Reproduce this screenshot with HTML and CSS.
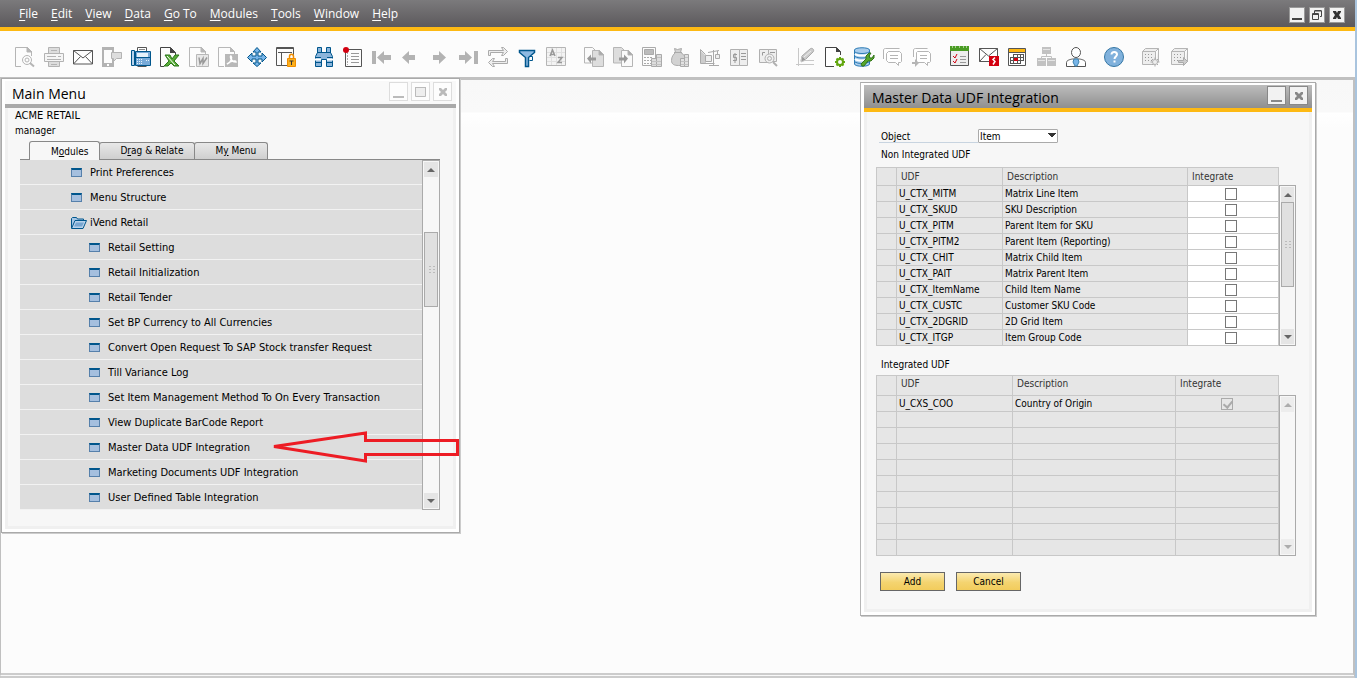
FILE: index.html
```
<!DOCTYPE html>
<html lang="en">
<head>
<meta charset="utf-8">
<title>Master Data UDF Integration</title>
<link rel="stylesheet" href="styles.css">
</head>
<body>
<div class="app">
<header class="menubar">
  <nav class="menus">
    <button><u>F</u>ile</button><button><u>E</u>dit</button><button><u>V</u>iew</button><button><u>D</u>ata</button><button><u>G</u>o To</button><button><u>M</u>odules</button><button><u>T</u>ools</button><button><u>W</u>indow</button><button><u>H</u>elp</button>
  </nav>
  <div class="appctl">
    <button aria-label="Minimize"><svg width="12" height="12"><path d="M1 9h10v2H1z" fill="#444"/></svg></button>
    <button aria-label="Restore"><svg width="12" height="12" fill="none" stroke="#444"><path d="M3.500 4V2h7v5.500H9M3.500 1.500h7M1.500 4.500h6v6h-6zM1.500 5.500h6"/></svg></button>
    <button aria-label="Close"><svg width="12" height="12"><path d="M2 2h3l1 2 1-2h3v1L8 6l2 3v1H7L6 8l-1 2H2V9l2-3-2-3z" fill="#333"/></svg></button>
  </div>
</header>

<div class="toolbar">
  <div class="tools">
    <button aria-label="Preview"><svg viewBox="0 0 20 20" fill="none" stroke="#b5b5b5"><path d="M6 19.500H.5v-19h12l4 4V9"/><path d="M12 0v5h5z" fill="#b5b5b5"/><circle cx="12" cy="13" r="4.500"/><circle cx="12" cy="13" r="2"/><path d="M15 16l4 3.500" stroke-width="2"/></svg></button>
    <button aria-label="Print"><svg viewBox="0 0 20 20" fill="#ddd" stroke="#b3b3b3"><path d="M4.500 7V.5h11V7"/><path d="M7 3.500h6"/><path d="M.5 6.500h19v8H.5z" fill="#f5f5f5"/><path d="M3 9.500h9M14 9.500h3M3 12.500h14"/><path d="M4.500 14.500h11v5h-11z"/><path d="M7 17.500h6"/></svg></button>
    <button aria-label="E-mail"><svg viewBox="0 0 20 20" fill="#fff" stroke="#555"><path d="M.5 3.500h19v13.500H.5zM.5 3.500l9.500 7.500 9.500-7.500M.5 17l7-7.500M19.500 17l-7-7.500"/></svg></button>
    <button aria-label="SMS"><svg viewBox="0 0 20 20"><path d="M0 0h12v5h-2V3H2v13h8v-4h2v8H0z" fill="#b3b3b3"/><path d="M5 17h2v2H5z" fill="#fff"/><path d="M9.500 5.500h10v6h-5l-3 3v-3h-2z" fill="#ddd" stroke="#b3b3b3"/></svg></button>
    <button aria-label="Fax"><svg viewBox="0 0 20 20"><path d="M6.500 5V.5h9V5M6.500 19.500h9" fill="#fff" stroke="#555"/><path d="M8 2.500h6" stroke="#888"/><path d="M.5 3.500h3v15h-3z" fill="#b8d3ec" stroke="#00568c"/><path d="M4.500 4.500h15v14h-15z" fill="#78aad8" stroke="#00568c"/><path d="M6 6h11v4H6z" fill="#e5f2fb"/><path d="M5 10.500h14" stroke="#00568c"/><path d="M6 12.500h6M6 14.500h6M6 16.500h6M15 13.500h3" stroke="#e5f2fb" stroke-dasharray="1 1"/></svg></button>
    <button aria-label="Export to Excel"><svg viewBox="0 0 20 20"><path d="M4 19.500H.5v-19h10l5 5V8" fill="none" stroke="#444"/><path d="M10 0v6h6z" fill="#444"/><path d="M5 8h5l2 4 3-4h4l-5 6 5 5h-5l-3-3-3 3H4l5-5z" fill="#59ad38" stroke="#2a761a"/><path d="M7 9l8 9" stroke="#fff"/></svg></button>
    <button aria-label="Export to Word"><svg viewBox="0 0 20 20" fill="none" stroke="#b8b8b8"><path d="M6 19.500H.5v-19h12l4 4V7"/><path d="M12 0v5h5z" fill="#b8b8b8"/><path d="M7.500 7.500h12v12h-12z" fill="#e8e8e8"/><path d="M10 10.500l1 6 3-5 0 5 4-6" stroke="#999" stroke-width="1.500"/></svg></button>
    <button aria-label="Export to PDF"><svg viewBox="0 0 20 20"><path d="M6 19.500H.5v-19h12l4 4V7" fill="none" stroke="#b8b8b8"/><path d="M12 0v5h5zM7 7h13v13H7z" fill="#b8b8b8"/><path d="M9 17c5-2 5-7 4-8s-1 6 5 6c0-2-6-1-9 2z" fill="none" stroke="#fff" stroke-width="1.500"/></svg></button>
    <button aria-label="Launch application"><svg viewBox="0 0 20 20"><path d="M10 .5l4 4.500h-3v4h4V6l4.500 4.500L15 15v-3h-4v4h3l-4 3.500L6 16h3v-4H5v3L.5 10.500 5 6v3h4V5H6z" fill="#78b5e8" stroke="#00568c"/></svg></button>
    <button aria-label="Lock screen"><svg viewBox="0 0 20 20"><path d="M11 18.500H.5V.5h17V9M0 1.500h18M2 5.500h14M5.500 5v13" fill="none" stroke="#555"/><path d="M13.500 12V9.500c0-3 4-3 4 0V12" fill="none" stroke="#ef8d00" stroke-width="1.500"/><path d="M11.500 11.500h8v8h-8z" fill="#fbaf1c" stroke="#ef8d00"/><path d="M13.500 14h4M15.500 14v4" stroke="#333"/></svg></button>
  </div>
  <div class="tools">
    <button aria-label="Find"><svg viewBox="0 0 20 20"><path d="M3.500.5h4v5h5v-5h4v5l2 4v10h-6v-7h-5v7h-6v-10l2-4z" fill="#8bb5db" stroke="#00568c"/><path d="M1 12.500h6M13 12.500h6" stroke="#fff" stroke-width="2"/><path d="M3 5.500h5M12 5.500h5M1 10.500h6M13 10.500h6M1 15.500h6M13 15.500h6" stroke="#00568c"/></svg></button>
    <button aria-label="Add"><svg viewBox="0 0 20 20"><path d="M2.500 5v14.500h16V2.500H5" fill="none" stroke="#555"/><path d="M8 6.500h8M8 9.500h8M8 12.500h8M8 15.500h8" stroke="#999"/><path d="M4.500 5v13" stroke="#aaa" stroke-dasharray="2 1"/><circle cx="3" cy="3" r="3" fill="#d30010"/></svg></button>
    <button aria-label="First record"><svg viewBox="0 0 20 20" fill="#b3b3b3"><path d="M0 4h4v13H0zM5 10.500L12 4v4h7v5h-7v4z"/></svg></button>
    <button aria-label="Previous record"><svg viewBox="0 0 20 20" fill="#b3b3b3"><path d="M1 10.500L8 4v4h6v5H8v4z"/></svg></button>
    <button aria-label="Next record"><svg viewBox="0 0 20 20" fill="#b3b3b3"><path d="M16 10.500L9 4v4H3v5h6v4z"/></svg></button>
    <button aria-label="Last record"><svg viewBox="0 0 20 20" fill="#b3b3b3"><path d="M15 4h4v13h-4zM13 10.500L6 4v4H0v5h6v4z"/></svg></button>
    <button aria-label="Refresh"><svg viewBox="0 0 20 20" fill="#eee" stroke="#aaa"><path d="M.5 8.500v-5h15l-2-3h2l4 4-4 4h-2l2-3h-13v3zM19.500 11.500v5h-15l2 3h-2l-4-4 4-4h2l-2 3h13v-3z"/></svg></button>
    <button aria-label="Filter"><svg viewBox="0 0 20 20"><path d="M2.500 3.500h15v2l-6 5v9h-3v-9l-6-5z" fill="#8db9e2" stroke="#00568c" stroke-width="1.500"/><path d="M12.500 9.500h3v4h-3" fill="none" stroke="#00568c"/></svg></button>
    <button aria-label="Sort"><svg viewBox="0 0 20 20" fill="none" stroke="#b5b5b5"><path d="M.5.500h19v18H.5z" fill="#f3f3f3"/><path d="M5.500 1v17M10.500 1v17M15.500 1v17M1 5.500h18M1 10.500h18M1 14.500h18" stroke="#e0e0e0"/><path d="M4 9l2.500-6L9 9M5 7.500h3M12 10.500h4l-4 5h4" stroke="#999" stroke-width="1.500"/></svg></button>
  </div>
  <div class="tools">
    <button aria-label="Base document"><svg viewBox="0 0 20 20" fill="#fafafa" stroke="#b5b5b5"><path d="M.5.500h8l3 3V16H.5z"/><path d="M8.500 3.500h7l4 4v12h-11z" fill="#ddd"/><path d="M15 3v5h5z" fill="#aaa"/><path d="M3 11.500l4-4v3h5v3H7v3z" fill="#999" stroke="none"/></svg></button>
    <button aria-label="Target document"><svg viewBox="0 0 20 20" fill="#ddd" stroke="#b5b5b5"><path d="M.5.500h8l3 3V16H.5z"/><path d="M8.500 3.500h7l4 4v12h-11z" fill="#fafafa"/><path d="M15 3v5h5z" fill="#aaa"/><path d="M15 11.500l-4-4v3H6v3h5v3z" fill="#999" stroke="none"/></svg></button>
    <button aria-label="Gross profit"><svg viewBox="0 0 20 20" fill="none" stroke="#aaa"><path d="M.5.500h13v18H.5z"/><path d="M2.500 2.500h9v5h-9z" fill="#bbb"/><path d="M2 10.500h9M2 13.500h9M2 16.500h9" stroke-dasharray="2 1"/><path d="M9.500 11.500h5v8h-5zM14.500 7.500h5v12h-5z" fill="#ddd"/><path d="M15 10.500h4M10 14.500h9M10 17.500h9" stroke="#c2c2c2"/></svg></button>
    <button aria-label="Payment means"><svg viewBox="0 0 20 20" fill="#d2d2d2" stroke="#aaa"><path d="M3.500 1.500l3 1 4-1-1 4c4 2 5 5 5 8 0 4-3 5-7 5s-7-1-7-5 2-6 4-8z"/><path d="M3 5.500h8"/><path d="M9.500 11.500h4v8h-4zM13.500 7.500h4v12h-4z" fill="#e2e2e2"/><path d="M14 10.500h3M10 14.500h7M10 17.500h7" stroke="#c2c2c2"/></svg></button>
    <button aria-label="Volume and weight"><svg viewBox="0 0 20 20" fill="none" stroke="#aaa"><path d="M.5 2.500v14h14M.5 2.500l5 5M1 10.500h2M13.500 3v15M8 5.500l11-2"/><path d="M1 4l5 5v7H1z" fill="#ccc" stroke="none"/><path d="M5.500 8.500h6v6h-6zM15.500 7.500h4v4h-4z" fill="#eee"/><path d="M9 18.500h10M17.500 4v3"/></svg></button>
    <button aria-label="Transaction journal"><svg viewBox="0 0 20 20" fill="#eee" stroke="#b0b0b0"><path d="M1.500 2.500h9v16h-9zM10.500 2.500h8v16h-8z"/><path d="M8 7.500H4.500v3h3v3H4M6 6v10M12 6.500h5M12 9.500h5M12 12.500h5" stroke="#999"/></svg></button>
    <button aria-label="Journal preview"><svg viewBox="0 0 20 20" fill="#eee" stroke="#b0b0b0"><path d="M1.500 2.500h9v13h-9zM10.500 2.500h8v12h-8z"/><path d="M7 5.500H4.500v3M12 5.500h5" stroke="#999"/><circle cx="11.500" cy="11.500" r="4.500"/><circle cx="11.500" cy="11.500" r="2"/><path d="M15 15l4 4" stroke-width="2"/></svg></button>
  </div>
  <div class="tools">
    <button aria-label="Layout designer"><svg viewBox="0 0 20 20" fill="none" stroke="#c8c8c8"><path d="M2.500 1v18M0 17.500h18M6 13.500h12"/><path d="M5 14l1-5 8-7c2-2 5 1 3 3l-8 8z" fill="#ccc" stroke="#aaa"/><path d="M5 15l1-6 4 4z" fill="#999"/><path d="M8 10l7-6" stroke="#eee"/></svg></button>
    <button aria-label="Document settings"><svg viewBox="0 0 20 20"><path d="M9 19.500H.5v-19h11l4 4V8" fill="#fff" stroke="#444"/><path d="M11 0v5h5z" fill="#444"/><circle cx="15" cy="15" r="3" fill="none" stroke="#61a60e" stroke-width="2"/><path d="M15 10v2M15 18v2M10 15h2M18 15h2M11.500 11.500l1.500 1.500M17 17l1.500 1.500M18.500 11.500L17 13M13 17l-1.500 1.500" stroke="#61a60e" stroke-width="2"/></svg></button>
    <button aria-label="Query manager"><svg viewBox="0 0 20 20"><path d="M.5 3C.5 0 15.500 0 15.500 3v14c0 3-15 3-15 0z" fill="#a9cdec" stroke="#2d7bb5"/><path d="M1 7c2 2 12 2 14 0M1 12c2 2 11 2 14 0" fill="none" stroke="#fff" stroke-width="2"/><path d="M1 5c3 2 11 2 14 0M1 9.500c3 2 11 2 14 0M1 15c3 2 10 2 14 0" fill="none" stroke="#2d7bb5"/><path d="M8 19l-1-2 5-5V9l3-3h2l-2 3 1 2h2l2-3v3l-3 3h-3l-4 5z" fill="#57a62b" stroke="#33751a"/></svg></button>
    <button aria-label="Messages"><svg viewBox="0 0 20 20" fill="#fff" stroke="#b5b5b5"><path d="M.5 12V3c0-1 1-1.500 2-1.500h14"/><path d="M5.500 4.500h11l2 2v8l-1 1h-2v3l-3-3h-7l-2-2v-7zM7 8.500h8M7 11.500h8"/></svg></button>
    <button aria-label="Forward message"><svg viewBox="0 0 20 20" fill="#fff" stroke="#b5b5b5"><path d="M1.500 10V3c0-1 1-1.500 2-1.500h12"/><path d="M5.500 4.500h11l2 2v8l-1 1h-2v3l-3-3h-8v-10zM8 8.500h7M8 11.500h7"/><path d="M0 15h3v-3l4 4-4 4v-3H0z" fill="#b5b5b5" stroke="none"/></svg></button>
  </div>
  <div class="tools">
    <button aria-label="Tasks"><svg viewBox="0 0 20 20"><path d="M.5 2.500h18v16H.5z" fill="#eee" stroke="#555"/><path d="M0-1h19v5H0z" fill="#4a9c23"/><path d="M2 0h1M5 0h1M9 0h1M13 0h1M16 0h1" stroke="#fff"/><path d="M3 9l2 2 2-4M3 14l2 2 2-4" fill="none" stroke="#d30010"/><path d="M10 9.500h6M10 12.500h6M10 15.500h6" stroke="#999"/></svg></button>
    <button aria-label="Alerts"><svg viewBox="0 0 20 20"><path d="M.5 1.500h18v13H.5zM.5 1.500L9.500 9l9-7.500M.5 14.500L7 7.500" fill="#fff" stroke="#555"/><path d="M10 9h10v10H10z" fill="#d30010"/><path d="M16 10.500l-2 2 2 2-2 3" stroke="#fff" stroke-width="1.500" fill="none"/></svg></button>
    <button aria-label="Calendar"><svg viewBox="0 0 20 20"><path d="M.5 1.500h17v17H.5z" fill="#fff" stroke="#555"/><path d="M1 2h16v3H1z" fill="#fcb814"/><path d="M1 5.500h16M5 7.500h11M2 10.500h14M2 13.500h14M2 16.500h11M2.500 10v6M5.500 7v9M9.500 7v9M12.500 7v9M15.500 7v6" stroke="#555" fill="none"/><path d="M6 11h4v3H6z" fill="#d30010"/></svg></button>
    <button aria-label="Organization"><svg viewBox="0 0 20 20" fill="#c2c2c2"><path d="M5 0h9v7H5zM0 11h9v8H0zM10 11h9v8h-9z"/><path d="M9.500 7v3M4.500 12V9.500h10V12" fill="none" stroke="#c2c2c2"/><path d="M6 2.500h7M1 13.500h7M11 13.500h7" stroke="#e5e5e5"/></svg></button>
    <button aria-label="User"><svg viewBox="0 0 20 20" fill="#fff" stroke="#555"><path d="M.5 19.500v-4c0-2 3-3 6-3.500h7c3 .5 6 1.500 6 3.500v4z"/><path d="M8 12h4l1 3-2 4H9l-2-4z" fill="#78b5e8" stroke="#3d82ae"/><ellipse cx="10" cy="5.500" rx="4.500" ry="5"/></svg></button>
  </div>
  <div class="tools">
    <button aria-label="Help"><svg viewBox="0 0 20 20"><circle cx="10" cy="10" r="9.500" fill="#80b1dc" stroke="#3577a5"/><path d="M7.500 7.500c0-3.500 5.500-3 5.500 0 0 2-2.500 2-2.500 4.500M10.500 13.500v2" fill="none" stroke="#fff" stroke-width="2"/></svg></button>
  </div>
  <div class="tools">
    <button aria-label="Server settings"><svg viewBox="0 0 20 20" fill="#eee" stroke="#b5b5b5"><path d="M.5 4.500l3-3h13l-3 3v13H.5zM.5 4.500h13M13.500 17.500l3-3v-13"/><path d="M3 7.500h9M3 10.500h9M3 13.500h9" stroke="#999" stroke-dasharray="1 2"/><circle cx="13" cy="15" r="2.500"/><path d="M13 10.500v2M13 17.500v2M8.500 15h2M15.500 15h2M10 12l1 1M15 17l1 1M16 12l-1 1M11 17l-1 1" stroke="#aaa"/></svg></button>
    <button aria-label="Server transfer"><svg viewBox="0 0 20 20" fill="#eee" stroke="#b5b5b5"><path d="M.5 4.500l3-3h13l-3 3v13H.5zM.5 4.500h13M13.500 17.500l3-3v-13"/><path d="M3 7.500h9M3 10.500h9M3 13.500h9" stroke="#999" stroke-dasharray="1 2"/><path d="M7.500 13.500h5v-3l4 4-4 4v-3h-5z" fill="#ccc" stroke="#aaa"/></svg></button>
  </div>
</div>

<main class="desktop">
  <section class="window main-menu">
    <header class="titlebar"><h1>Main Menu</h1>
      <div class="winctl">
        <button aria-label="Minimize"><svg width="12" height="12"><path d="M0 10h11v2H0z"/></svg></button>
        <button aria-label="Maximize"><svg width="12" height="12"><path d="M.5 1.500h10v9H.5zM0 1.500h11" fill="#eee" stroke="#bbb"/></svg></button>
        <button aria-label="Close"><svg width="12" height="12"><path d="M2 2h2l2 2 2-2h2v2L8 6l2 2v2H8L6 8l-2 2H2V8l2-2-2-2z"/></svg></button>
      </div>
    </header>
    <div class="client">
      <p class="who company">ACME RETAIL</p>
      <p class="who">manager</p>
      <div class="tabs" role="tablist">
        <button class="tab active" role="tab" aria-selected="true">M<u>o</u>dules</button>
        <button class="tab" role="tab">D<u>r</u>ag &amp; Relate</button>
        <button class="tab" role="tab">M<u>y</u> Menu</button>
      </div>
      <div class="listbox">
        <ul class="tree">
          <li class="item">Print Preferences</li>
          <li class="item">Menu Structure</li>
          <li class="folder"><svg width="16" height="12" viewBox="0 0 16 12"><path d="M.5 11V1.500L1.500.500h4l1 1.500h6v2" fill="#a5c6e6" stroke="#00568c"/><path d="M.5 11.500L4 3.500h11.500L12 11.500z" fill="#b9d3ec" stroke="#00568c"/><path d="M3 9.500l2-4h8l-2 4z" fill="#78a6d0"/></svg>iVend Retail</li>
          <li class="item sub">Retail Setting</li>
          <li class="item sub">Retail Initialization</li>
          <li class="item sub">Retail Tender</li>
          <li class="item sub">Set BP Currency to All Currencies</li>
          <li class="item sub">Convert Open Request To SAP Stock transfer Request</li>
          <li class="item sub">Till Variance Log</li>
          <li class="item sub">Set Item Management Method To On Every Transaction</li>
          <li class="item sub">View Duplicate BarCode Report</li>
          <li class="item sub">Master Data UDF Integration</li>
          <li class="item sub">Marketing Documents UDF Integration</li>
          <li class="item sub">User Defined Table Integration</li>
        </ul>
        <div class="scrollbar menu-scroll">
          <button aria-label="Scroll up" class="up"></button>
          <div class="track"><div class="thumb"></div></div>
          <button aria-label="Scroll down" class="down"></button>
        </div>
      </div>
    </div>
  </section>

  <svg class="arrow" width="192" height="34" viewBox="0 0 192 34"><path d="M4 16.500L95.500 3v7.500h92v14h-92V31z" fill="none" stroke="#ed1c24" stroke-width="3"/></svg>

  <section class="window udf">
    <header class="titlebar"><h1>Master Data UDF Integration</h1>
      <div class="winctl">
        <button aria-label="Minimize"><svg width="12" height="12"><path d="M0 10h11v2H0z"/></svg></button>
        <button aria-label="Close"><svg width="12" height="12"><path d="M2 2h2l2 2 2-2h2v2L8 6l2 2v2H8L6 8l-2 2H2V8l2-2-2-2z"/></svg></button>
      </div>
    </header>
    <div class="client">
      <div class="field"><label for="object">Object</label><select id="object"><option>Item</option></select></div>
      <p class="caption">Non Integrated UDF</p>
      <div class="grid">
        <table class="first">
          <colgroup><col class="c-row"><col class="c-udf"><col class="c-desc"><col></colgroup>
          <thead><tr><th></th><th>UDF</th><th>Description</th><th>Integrate</th></tr></thead>
          <tbody>
          <tr><td></td><td>U_CTX_MITM</td><td>Matrix Line Item</td><td><input type="checkbox" aria-label="Integrate U_CTX_MITM"></td></tr>
          <tr><td></td><td>U_CTX_SKUD</td><td>SKU Description</td><td><input type="checkbox" aria-label="Integrate U_CTX_SKUD"></td></tr>
          <tr><td></td><td>U_CTX_PITM</td><td>Parent Item for SKU</td><td><input type="checkbox" aria-label="Integrate U_CTX_PITM"></td></tr>
          <tr><td></td><td>U_CTX_PITM2</td><td>Parent Item (Reporting)</td><td><input type="checkbox" aria-label="Integrate U_CTX_PITM2"></td></tr>
          <tr><td></td><td>U_CTX_CHIT</td><td>Matrix Child Item</td><td><input type="checkbox" aria-label="Integrate U_CTX_CHIT"></td></tr>
          <tr><td></td><td>U_CTX_PAIT</td><td>Matrix Parent Item</td><td><input type="checkbox" aria-label="Integrate U_CTX_PAIT"></td></tr>
          <tr><td></td><td>U_CTX_ItemName</td><td>Child Item Name</td><td><input type="checkbox" aria-label="Integrate U_CTX_ItemName"></td></tr>
          <tr><td></td><td>U_CTX_CUSTC</td><td>Customer SKU Code</td><td><input type="checkbox" aria-label="Integrate U_CTX_CUSTC"></td></tr>
          <tr><td></td><td>U_CTX_2DGRID</td><td>2D Grid Item</td><td><input type="checkbox" aria-label="Integrate U_CTX_2DGRID"></td></tr>
          <tr><td></td><td>U_CTX_ITGP</td><td>Item Group Code</td><td><input type="checkbox" aria-label="Integrate U_CTX_ITGP"></td></tr>
          </tbody>
        </table>
        <div class="scrollbar grid-scroll">
          <button aria-label="Scroll up" class="up"></button>
          <div class="track"><div class="thumb"></div></div>
          <button aria-label="Scroll down" class="down"></button>
        </div>
      </div>
      <p class="caption second-caption">Integrated UDF</p>
      <div class="grid">
        <table class="second">
          <colgroup><col class="c-row"><col class="c-udf"><col class="c-desc"><col></colgroup>
          <thead><tr><th></th><th>UDF</th><th>Description</th><th>Integrate</th></tr></thead>
          <tbody>
          <tr><td></td><td>U_CXS_COO</td><td>Country of Origin</td><td><input type="checkbox" checked disabled aria-label="Integrate U_CXS_COO"></td></tr>
          <tr><td></td><td></td><td></td><td></td></tr>
          <tr><td></td><td></td><td></td><td></td></tr>
          <tr><td></td><td></td><td></td><td></td></tr>
          <tr><td></td><td></td><td></td><td></td></tr>
          <tr><td></td><td></td><td></td><td></td></tr>
          <tr><td></td><td></td><td></td><td></td></tr>
          <tr><td></td><td></td><td></td><td></td></tr>
          <tr><td></td><td></td><td></td><td></td></tr>
          <tr><td></td><td></td><td></td><td></td></tr>
          </tbody>
        </table>
        <div class="scrollbar grid-scroll idle">
          <button aria-label="Scroll up" class="up" disabled></button>
          <div class="track"></div>
          <button aria-label="Scroll down" class="down" disabled></button>
        </div>
      </div>
      <div class="actions"><button>Add</button><button>Cancel</button></div>
    </div>
  </section>
</main>
</div>
</body>
</html>
```
FILE: styles.css
```
* { box-sizing: border-box; }
body { margin: 0; color: #000; font: 10px/16px "DejaVu Sans Condensed", "Open Sans", sans-serif; background: #fcfcfc; }
button { margin: 0; padding: 0; border: 0; background: none; font: inherit; color: inherit; }
p, h1, ul { margin: 0; padding: 0; }
svg { display: block; }
.app { display: flex; flex-direction: column; min-height: 100vh; border-right: 2px solid #a9c4de; }

.menubar { display: flex; justify-content: space-between; align-items: center; height: 31px; padding: 0 10px 0 19px; border-bottom: 4px solid #fdb913; background: linear-gradient(#7b7a7c, #5c595c); color: #fff; }
.menus { display: flex; gap: 13px; font: 12px/16px "Open Sans", sans-serif; }
.menus u { text-underline-offset: 2px; }
.appctl { display: flex; gap: 4px; padding-top: 3px; }
.appctl button { display: grid; place-items: center; width: 16px; height: 16px; border: 1px solid #999; background: #f2f2f2; }

.toolbar { display: flex; gap: 9px; height: 46px; padding: 6px 0 0 10px; }
.tools { display: flex; }
.tools button { display: flex; align-items: center; width: 29px; height: 40px; padding-left: 5px; }
.tools svg { width: 20px; height: 20px; overflow: visible; }

.desktop { position: relative; flex: 1; border: solid #c0c0c0; border-width: 3px 2px 5px 1px; border-bottom: 5px double #ccc; background: linear-gradient(#f8f8f8, #f9f9f9 32px, #fff 33px, #fcfcfc 48px); }
.window { position: absolute; border: 1px solid #aaa; background: #fff; padding: 2px 3px 3px; box-shadow: 1px 1px 0 #ccc; }
.main-menu { left: 0; top: -2px; width: 459px; }
.udf { left: 859px; top: 2px; width: 456px; border-left-color: #b5b5b5; }
.titlebar { display: flex; justify-content: space-between; height: 27px; padding: 1px 4px 0 7px; background: #f9f9f9; border-bottom: 4px solid #a9a9a9; }
.titlebar h1 { font: 14px/24px "Open Sans", sans-serif; }
.winctl { display: flex; gap: 3px; }
.winctl button { display: grid; place-items: center; width: 19px; height: 19px; border: 1px solid #ddd; background: #fdfdfd; fill: #bbb; }
.udf .titlebar { padding-left: 8px; background: linear-gradient(#bdbdbd, #8f8f8f); border-bottom-color: #fdb913; }
.udf .winctl button { border: 1px solid #888; background: #f2f2f2; fill: #888; }
.client { background: #f7f7f7; border: 3px solid #f0f0f0; border-top: 0; }

.main-menu .client { padding: 0 13px 16px 12px; }
.who { line-height: 15px; margin-left: -5px; }
.company { font-size: 11px; }
.tabs { display: flex; align-items: flex-end; height: 22px; padding-left: 9px; border-bottom: 1px solid #888; }
.tab { height: 17px; line-height: 16px; padding: 0 11px 0 20px; margin-left: -1px; border: 1px solid #888; border-bottom: 0; border-radius: 3px 3px 0 0; background: linear-gradient(#e8e8e8, #cfcfcf); }
.tab.active { height: 19px; margin: 0 0 -1px; padding: 0 11px 0 21px; line-height: 20px; background: #f7f7f7; }
.listbox { display: flex; font-size: 11px; }
.tree { flex: 1; list-style: none; }
.tree li { display: flex; align-items: center; height: 25px; padding: 1px 0 0 51px; border-bottom: 1px solid #f2f2f2; background: #ddd; }
.tree li.sub { padding-left: 69px; }
.item::before { content: ""; width: 11px; height: 9px; margin-right: 8px; border: solid #5680ab; border-width: 2px 1px 1px; border-top-color: #00568c; background: #a5bfde; box-sizing: border-box; }
.folder svg { margin-right: 3px; }

.scrollbar { display: flex; flex-direction: column; width: 17px; padding: 1px; border: 1px solid #aaa; background: #f7f7f7; }
.menu-scroll { width: 18px; }
.scrollbar button { display: grid; place-items: center; height: 15px; background: #e5e5e5; }
.scrollbar button::before { content: ""; border: 4px solid transparent; }
.scrollbar .up::before { border-bottom-color: #666; border-top-width: 0; }
.scrollbar .down::before { border-top-color: #666; border-bottom-width: 0; }
.scrollbar button:disabled { opacity: .5; }
.track { flex: 1; }
.thumb { display: grid; place-items: center; height: 75px; border: 1px solid #aaa; background: #e0e0e0; }
.menu-scroll .thumb { margin-top: 55px; }
.thumb::before { content: ""; width: 7px; height: 9px; background: radial-gradient(circle, #bbb 1px, transparent 1px) 0 0 / 4px 3px; }
.grid-scroll { margin-top: 18px; }
.grid-scroll .thumb { height: 85px; }
.arrow { position: absolute; left: 269px; top: 350px; }

.udf .client { padding: 17px 13px 18px 9px; }
.field { display: flex; width: 179px; margin-left: 3px; }
.field label { flex: 1; height: 14px; padding-left: 2px; border-bottom: 1px solid #c8d4e0; }
.field select { appearance: none; width: 80px; height: 14px; padding: 1px 1px 0; border: 1px solid #aaa; border-radius: 1px; font: inherit; line-height: 12px; color: #000; background: conic-gradient(from -45deg at 50% 100%, #333 90deg, transparent 0) no-repeat 69px 3px / 8px 4px, #fff; }
.caption { padding-left: 5px; line-height: 16px; margin: 4px 0; }
.second-caption { margin: 11px 0 2px; }
.grid { display: flex; }
table { width: 403px; border-collapse: collapse; table-layout: fixed; }
th, td { height: 16px; padding: 0 0 0 2px; border: 1px solid #c8c8c8; background: #e6e6e6; font-weight: 400; line-height: 15px; text-align: left; white-space: nowrap; }
th { padding-left: 4px; color: #333; }
td:last-child { padding: 0; text-align: center; }
.first th { height: 18px; padding-bottom: 1px; }
.second th { height: 20px; padding-bottom: 4px; }
.second + .scrollbar { margin-top: 20px; }
.first td:last-child { background: #fff; }
.c-row { width: 20px; }
.first .c-udf { width: 106px; }
.first .c-desc { width: 185px; }
.second .c-udf { width: 116px; }
.second .c-desc { width: 163px; }
input { appearance: none; display: block; width: 12px; height: 12px; margin: 1px auto; border: 1px solid #777; background: #fff; }
.first input { margin-left: 37px; }
input:checked { border-color: #aaa; background: #e6e6e6; }
input:checked::before { content: ""; display: block; width: 4px; height: 7px; margin: 0 0 0 3px; border: solid #aaa; border-width: 0 2px 2px 0; transform: rotate(40deg); }
.actions { display: flex; gap: 11px; margin: 16px 0 0 4px; }
.actions button { width: 65px; height: 19px; border: 1px solid #666; background: linear-gradient(#fbeab0, #f4d470 55%, #f2cc5c); line-height: 17px; }
```
